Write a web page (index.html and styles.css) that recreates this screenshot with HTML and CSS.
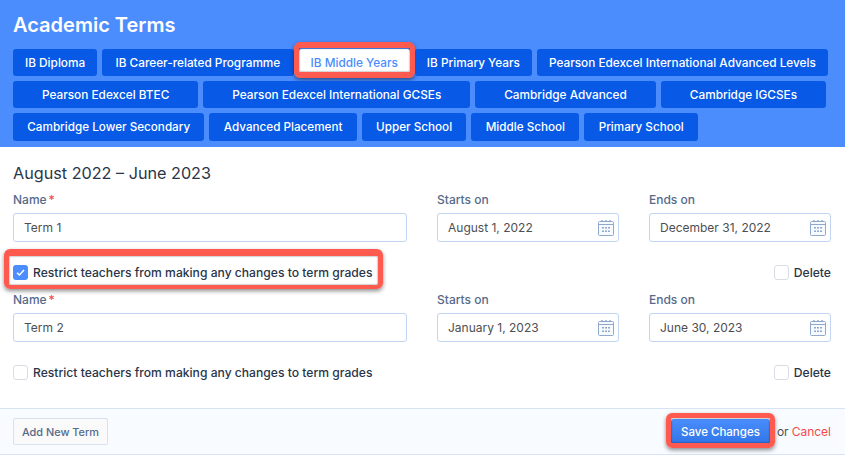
FILE: index.html
```html
<!DOCTYPE html>
<html>

<head>
  <title>Academic Terms</title>
  <link rel="stylesheet" href="styles.css">
</head>

<body>
  <svg class="icon-defs" width="0" height="0">
    <symbol id="calendar" viewBox="0 0 16 16">
      <rect x="0.5" y="1.5" width="15" height="14" rx="1" fill="#f7faff" stroke="#8fa8cb" />
      <path d="M0.5 4.5H15.5" stroke="#8fa8cb" />
      <path d="M3 1.5a1 1 0 0 1 2 0M7 1.5a1 1 0 0 1 2 0M11 1.5a1 1 0 0 1 2 0" fill="none" stroke="#8fa8cb" />
      <path d="M4 7h2v1.5H4zM7 7h2v1.5H7zM10 7h2v1.5h-2zM4 10.500h2V12H4zM7 10.500h2V12H7zM10 10.500h2V12h-2z" fill="#8fa8cb" />
    </symbol>
  </svg>

  <header class="terms-header">
    <h1>Academic Terms</h1>
    <div class="tab-row first">
      <button type="button" class="tab">IB Diploma</button>
      <button type="button" class="tab">IB Career-related Programme</button>
      <button type="button" class="tab active">IB Middle Years<span class="callout"></span></button>
      <button type="button" class="tab">IB Primary Years</button>
      <button type="button" class="tab">Pearson Edexcel International Advanced Levels</button>
    </div>
    <div class="tab-row second">
      <button type="button" class="tab">Pearson Edexcel BTEC</button>
      <button type="button" class="tab">Pearson Edexcel International GCSEs</button>
      <button type="button" class="tab">Cambridge Advanced</button>
      <button type="button" class="tab">Cambridge IGCSEs</button>
    </div>
    <div class="tab-row last">
      <button type="button" class="tab">Cambridge Lower Secondary</button>
      <button type="button" class="tab">Advanced Placement</button>
      <button type="button" class="tab">Upper School</button>
      <button type="button" class="tab">Middle School</button>
      <button type="button" class="tab">Primary School</button>
    </div>
  </header>

  <main class="terms-body">
    <h2>August 2022 – June 2023</h2>

    <div class="term-fields">
      <div class="field">
        <label>Name<span class="req">*</span></label>
        <div class="input">Term 1</div>
      </div>
      <div class="field">
        <label>Starts on</label>
        <div class="input">August 1, 2022<svg class="cal"><use href="#calendar" /></svg></div>
      </div>
      <div class="field">
        <label>Ends on</label>
        <div class="input">December 31, 2022<svg class="cal"><use href="#calendar" /></svg></div>
      </div>
    </div>
    <div class="term-options">
      <div class="check-item">
        <span class="box checked">
          <svg viewBox="0 0 15 15" width="15" height="15"><path d="M4 7.700l2.400 2.300 4.600-5" fill="none" stroke="#fff" stroke-width="1.500" /></svg>
        </span>
        Restrict teachers from making any changes to term grades
        <span class="callout"></span>
      </div>
      <div class="check-item"><span class="box"></span>Delete</div>
    </div>

    <div class="term-fields">
      <div class="field">
        <label>Name<span class="req">*</span></label>
        <div class="input">Term 2</div>
      </div>
      <div class="field">
        <label>Starts on</label>
        <div class="input">January 1, 2023<svg class="cal"><use href="#calendar" /></svg></div>
      </div>
      <div class="field">
        <label>Ends on</label>
        <div class="input">June 30, 2023<svg class="cal"><use href="#calendar" /></svg></div>
      </div>
    </div>
    <div class="term-options">
      <div class="check-item"><span class="box"></span>Restrict teachers from making any changes to term grades</div>
      <div class="check-item"><span class="box"></span>Delete</div>
    </div>
  </main>

  <footer class="terms-footer">
    <button type="button" class="add-term">Add New Term</button>
    <div class="save-wrap">
      <button type="button" class="save">Save Changes<span class="callout"></span></button>
      <span class="or">or</span>
      <a class="cancel">Cancel</a>
    </div>
  </footer>
</body>

</html>
```

FILE: styles.css
```css
* {
  box-sizing: border-box;
}

body {
  margin: 0;
  height: 457px;
  overflow: hidden;
  background-color: #fff;
  font-family: Inter, "Noto Sans", sans-serif;
  color: #2a3548;
}

.icon-defs {
  position: absolute;
}

.terms-header {
  height: 147px;
  padding: 13px 19px 0 13px;
  background-color: #4b8dfd;
}

.terms-header h1 {
  margin: 0 0 12px 0;
  height: 24px;
  line-height: 24px;
  font-size: 20px;
  font-weight: 600;
  color: #fff;
}

.tab-row {
  display: flex;
  gap: 5px;
  margin-bottom: 5px;
}

.tab {
  position: relative;
  height: 27px;
  border: none;
  border-radius: 3px;
  background-color: #0759e6;
  color: #fff;
  font-family: inherit;
  font-size: 11.8px;
  font-weight: 500;
  white-space: nowrap;
}

.tab-row.first .tab {
  flex-grow: 1;
  padding: 0 12px;
}

.tab-row.first .tab:nth-child(2) {
  padding: 0 13.25px;
}

.tab-row.second .tab {
  flex-grow: 1;
  padding: 0 14px;
}

.tab-row.last .tab {
  height: 28px;
  padding: 0 14.3px;
  font-size: 11.7px;
}

.tab.active {
  background-color: #fff;
  color: #4b8dfd;
}

.callout {
  position: absolute;
  border: 5px solid #ff5a4f;
  border-radius: 6px;
  box-shadow: 0 2px 4px rgba(0, 0, 0, 0.45), inset 0 0 2px rgba(0, 0, 0, 0.6);
  pointer-events: none;
}

.tab .callout {
  top: -7px;
  left: -5px;
  right: -5px;
  bottom: -2px;
  border-width: 6px 5px;
}

.terms-body {
  padding: 14px 14px 0 13px;
}

.terms-body h2 {
  margin: 0 0 7px 0;
  height: 24px;
  line-height: 24px;
  font-size: 16.2px;
  font-weight: 400;
  color: #2a3548;
}

.term-fields {
  display: grid;
  grid-template-columns: 1fr 182px 182px;
  column-gap: 30px;
}

.field label {
  display: block;
  height: 16px;
  line-height: 16px;
  margin-bottom: 5px;
  font-size: 12px;
  font-weight: 500;
  color: #566a8a;
}

.req {
  margin-left: 2px;
  color: #f5494d;
}

.input {
  display: flex;
  align-items: center;
  justify-content: space-between;
  height: 29px;
  padding: 0 4px 0 10px;
  border: 1px solid #bfd5f2;
  border-radius: 3px;
  background-color: #fff;
  font-size: 12px;
  color: #4d4f53;
}

.cal {
  width: 16px;
  height: 16px;
}

.term-options {
  display: flex;
  justify-content: space-between;
  align-items: center;
  height: 20px;
  margin: 20px 0 10px 0;
}

.check-item {
  position: relative;
  display: flex;
  align-items: center;
  gap: 5px;
  font-size: 12.13px;
  font-weight: 500;
  color: #2a3548;
}

.check-item .callout {
  top: -16px;
  left: -9px;
  right: -11px;
  bottom: -9px;
  border-width: 7px 5px 4px;
}

.box {
  display: flex;
  width: 15px;
  height: 15px;
  border: 1px solid #d9dde3;
  border-radius: 3px;
  background-color: #fff;
}

.box.checked {
  border: none;
  background-color: #4b8dfd;
}

.terms-footer {
  position: absolute;
  top: 408px;
  left: 0;
  right: 0;
  height: 47px;
  display: flex;
  justify-content: space-between;
  align-items: flex-start;
  padding: 9px 14px 0 13px;
  border-top: 1px solid #d8e4f4;
  border-bottom: 1px solid #d8e4f4;
  background-color: #f8fbff;
}

.add-term {
  width: 95px;
  height: 27px;
  padding: 0;
  border: 1px solid #d8e2ee;
  border-radius: 2px;
  background-color: #fafafa;
  color: #566a8a;
  font-family: inherit;
  font-size: 10.9px;
  font-weight: 500;
}

.save-wrap {
  display: flex;
  align-items: center;
  height: 27px;
  font-size: 12px;
}

.save {
  position: relative;
  width: 99px;
  height: 26px;
  margin-right: 7px;
  border: none;
  border-radius: 3px;
  background: linear-gradient(#4a8dfc, #2f74e8);
  color: #fff;
  font-family: inherit;
  font-size: 11.5px;
  font-weight: 500;
}

.save .callout {
  top: -6px;
  left: -5px;
  right: -5px;
  bottom: -3px;
}

.or {
  margin-right: 3px;
  color: #4d4f53;
}

.cancel {
  color: #f5494d;
}
```
